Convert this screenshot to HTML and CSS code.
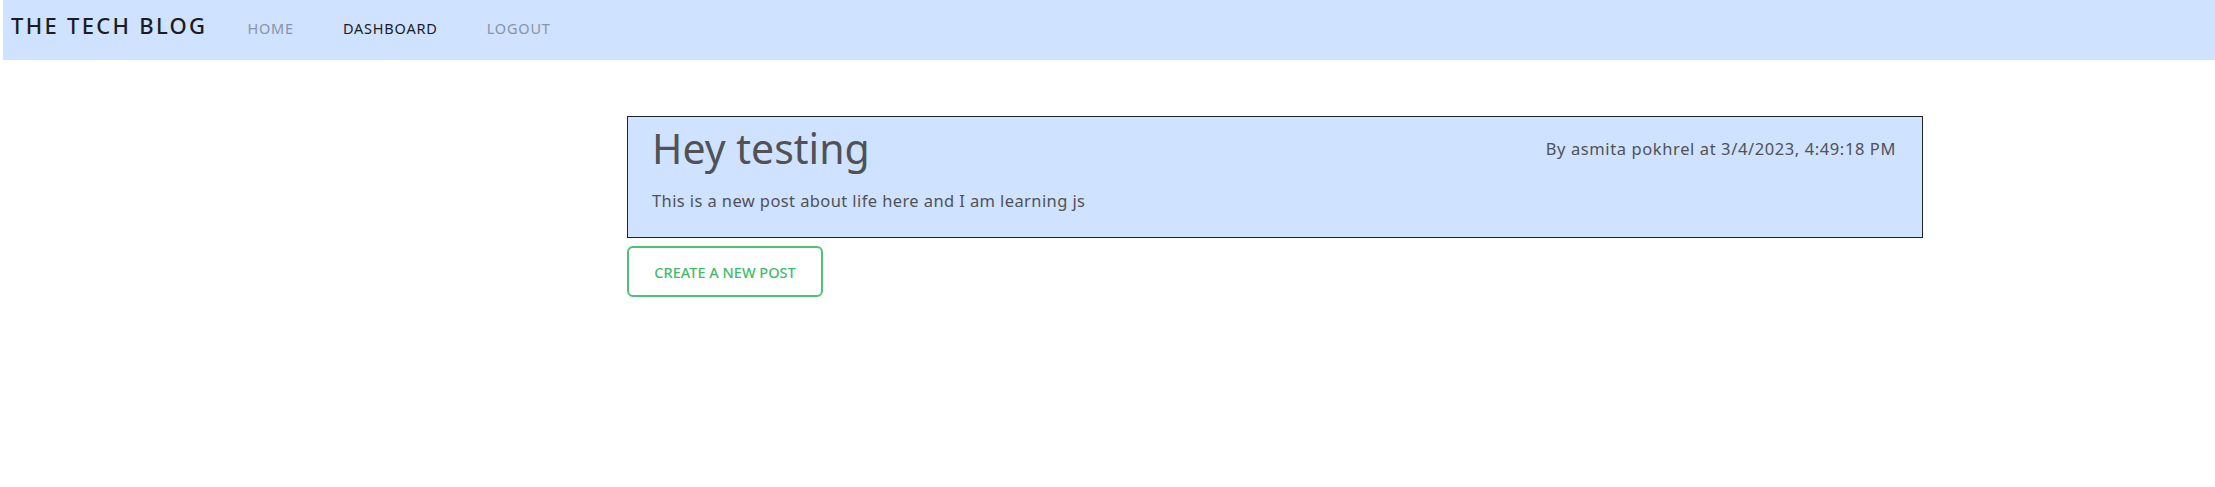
FILE: index.html
```html
<!DOCTYPE html>
<html lang="en">
<head>
<meta charset="utf-8">
<title>The Tech Blog</title>
<link rel="stylesheet" href="styles.css">
</head>
<body>
<nav class="navbar">
  <a class="brand" href="#">THE TECH BLOG</a>
  <ul class="nav-links">
    <li><a class="nav-link" href="#">HOME</a></li>
    <li><a class="nav-link active" href="#">DASHBOARD</a></li>
    <li><a class="nav-link" href="#">LOGOUT</a></li>
  </ul>
</nav>
<main class="main">
  <article class="post">
    <div class="post-head">
      <h2 class="post-title">Hey testing</h2>
      <p class="post-meta">By asmita pokhrel at 3/4/2023, 4:49:18 PM</p>
    </div>
    <p class="post-body">This is a new post about life here and I am learning js</p>
  </article>
  <button class="btn-new" type="button">CREATE A NEW POST</button>
</main>
</body>
</html>
```
FILE: styles.css
```css
* { box-sizing: border-box; }
html, body { margin: 0; padding: 0; background: #fff; }
body { font-family: "Noto Sans", "Open Sans", sans-serif; color: #212529; }

.navbar {
  margin-left: 3px;
  height: 60px;
  background: #cfe2ff;
  display: flex;
  align-items: flex-start;
  padding-left: 8px;
}
.brand {
  font-size: 22px;
  font-weight: 500;
  letter-spacing: 2.3px;
  color: #1c1d20;
  text-decoration: none;
  line-height: 1;
  padding-top: 14px;
}
.nav-links {
  list-style: none;
  margin: 0 0 0 40px;
  padding: 0;
  display: flex;
  gap: 49px;
}
.nav-link {
  display: block;
  font-size: 14.5px;
  letter-spacing: 0.8px;
  color: #8a94a4;
  text-decoration: none;
  line-height: 1;
  padding-top: 21px;
}
.nav-link.active { color: #1c1d20; }

.main {
  padding: 56px 0 0 627px;
  display: flex;
  flex-direction: column;
  align-items: flex-start;
  gap: 8px;
}
.post {
  width: 1296px;
  height: 122px;
  border: 1px solid #222;
  background: #cfe2ff;
  padding: 0 26px 0 24px;
  color: #505254;
}
.post-head {
  display: flex;
  justify-content: space-between;
  align-items: flex-start;
}
.post-title {
  margin: 0;
  font-size: 41px;
  font-weight: 400;
  line-height: 1.2;
  padding-top: 7px;
}
.post-meta {
  margin: 0;
  font-size: 16.5px;
  letter-spacing: 0.6px;
  line-height: 1.2;
  padding-top: 22px;
}
.post-body {
  margin: 18px 0 0;
  font-size: 16.5px;
  letter-spacing: 0.4px;
  line-height: 1.2;
}
.btn-new {
  width: 196px;
  height: 51px;
  border: 2px solid #4bc275;
  border-radius: 6px;
  background: #fff;
  color: #3dbd69;
  font-family: "Noto Sans", "Open Sans", sans-serif;
  font-size: 14.5px;
  font-weight: 500;
  padding: 0;
  cursor: pointer;
}
```
